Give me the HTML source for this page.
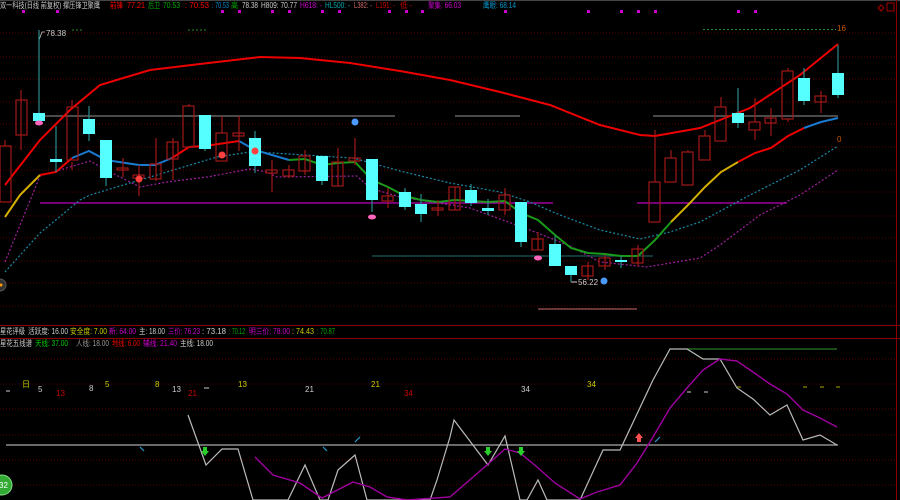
<!DOCTYPE html><html><head><meta charset="utf-8"><style>
html,body{margin:0;padding:0;background:#000;width:900px;height:500px;overflow:hidden}
svg{display:block}
text{font-family:"Liberation Sans","Noto Sans CJK SC",sans-serif;font-size:8px}
</style></head><body>
<svg width="900" height="500" viewBox="0 0 900 500" xmlns="http://www.w3.org/2000/svg">
<rect width="900" height="500" fill="#000"/>
<line x1="0" y1="0.5" x2="900" y2="0.5" stroke="#444"/>
<g stroke="#5a0000" stroke-dasharray="1,2" stroke-width="1">
<line x1="0" y1="33" x2="895" y2="33"/><line x1="0" y1="57" x2="895" y2="57"/><line x1="0" y1="79" x2="895" y2="79"/><line x1="0" y1="102" x2="895" y2="102"/><line x1="0" y1="124" x2="895" y2="124"/><line x1="0" y1="147" x2="895" y2="147"/><line x1="0" y1="170" x2="895" y2="170"/><line x1="0" y1="192" x2="895" y2="192"/><line x1="0" y1="216" x2="895" y2="216"/><line x1="0" y1="238" x2="895" y2="238"/><line x1="0" y1="261" x2="895" y2="261"/><line x1="0" y1="283" x2="895" y2="283"/><line x1="0" y1="306" x2="895" y2="306"/>
<line x1="0" y1="359" x2="895" y2="359"/><line x1="0" y1="384" x2="895" y2="384"/><line x1="0" y1="409" x2="895" y2="409"/><line x1="0" y1="435" x2="895" y2="435"/><line x1="0" y1="460" x2="895" y2="460"/><line x1="0" y1="485" x2="895" y2="485"/>
</g>
<line x1="0" y1="325.5" x2="900" y2="325.5" stroke="#8a0000"/>
<line x1="0" y1="338.5" x2="900" y2="338.5" stroke="#8a0000"/>
<line x1="896.5" y1="0" x2="896.5" y2="500" stroke="#8a0000"/>
<g lengthAdjust="spacingAndGlyphs">
<text x="0" y="8" fill="#ccc" textLength="100" lengthAdjust="spacingAndGlyphs">双一科技(日线 前复权) 撑压锋卫聚鹰</text>
<text x="110" y="8" fill="#f00" textLength="13" lengthAdjust="spacingAndGlyphs">前锋</text><text x="127" y="8" fill="#f00" textLength="18" lengthAdjust="spacingAndGlyphs">77.21</text>
<text x="148" y="8" fill="#0a0" textLength="12" lengthAdjust="spacingAndGlyphs">后卫</text><text x="163" y="8" fill="#0a0" textLength="17" lengthAdjust="spacingAndGlyphs">70.53</text>
<text x="185" y="8" fill="#f00" textLength="24" lengthAdjust="spacingAndGlyphs">: 70.53</text>
<text x="212" y="8" fill="#08c" textLength="17" lengthAdjust="spacingAndGlyphs">: 70.53</text>
<text x="231" y="8" fill="#0a0" textLength="7" lengthAdjust="spacingAndGlyphs">高</text><text x="242" y="8" fill="#ccc" textLength="16" lengthAdjust="spacingAndGlyphs">78.38</text>
<text x="261" y="8" fill="#ccc" textLength="36" lengthAdjust="spacingAndGlyphs">H809: 70.77</text>
<text x="300" y="8" fill="#c0c" textLength="22" lengthAdjust="spacingAndGlyphs">H618: -</text>
<text x="325" y="8" fill="#0aa" textLength="25" lengthAdjust="spacingAndGlyphs">HL500: -</text>
<text x="354" y="8" fill="#c66" textLength="18" lengthAdjust="spacingAndGlyphs">L382: -</text>
<text x="376" y="8" fill="#c00" textLength="19" lengthAdjust="spacingAndGlyphs">L191: -</text>
<text x="400" y="8" fill="#c00" textLength="12" lengthAdjust="spacingAndGlyphs">低 -</text>
<text x="428" y="8" fill="#c0c" textLength="33" lengthAdjust="spacingAndGlyphs">聚集: 66.03</text>
<text x="483" y="8" fill="#09c" textLength="33" lengthAdjust="spacingAndGlyphs">鹰眼: 68.14</text>
</g>
<g fill="#c0c"><rect x="22" y="10" width="3" height="3"/><rect x="56" y="10" width="3" height="3"/><rect x="221" y="10" width="3" height="3"/><rect x="238" y="10" width="3" height="3"/><rect x="271" y="10" width="3" height="3"/><rect x="288" y="10" width="3" height="3"/><rect x="321" y="10" width="3" height="3"/><rect x="338" y="10" width="3" height="3"/><rect x="388" y="10" width="3" height="3"/><rect x="405" y="10" width="3" height="3"/><rect x="421" y="10" width="3" height="3"/><rect x="504" y="10" width="3" height="3"/><rect x="587" y="10" width="3" height="3"/><rect x="620" y="10" width="3" height="3"/><rect x="637" y="10" width="3" height="3"/><rect x="654" y="10" width="3" height="3"/><rect x="737" y="10" width="3" height="3"/><rect x="754" y="10" width="3" height="3"/></g>
<g stroke="#a00" fill="none"><path d="M881 5l3 3-3 3-3-3z"/><rect x="887" y="3" width="7" height="8"/></g>
<g stroke="#2a8a2a" stroke-dasharray="2,2"><line x1="72" y1="30" x2="82" y2="30"/><line x1="188" y1="30" x2="206" y2="30"/><line x1="703" y1="29.5" x2="836" y2="29.5"/></g>
<text x="837" y="31" fill="#c50">16</text><text x="837" y="142" fill="#c50">0</text>
<text x="46" y="36" fill="#ccc">78.38</text>
<path d="M39 40 L42 32 L45 32" stroke="#ccc" fill="none" stroke-width=".8"/>
<text x="578" y="285" fill="#ccc">56.22</text>
<line x1="571" y1="282" x2="577" y2="282" stroke="#ccc"/>
<g stroke-width="1.3">
<line x1="38" y1="116" x2="395" y2="116" stroke="#777"/><line x1="455" y1="116" x2="520" y2="116" stroke="#777"/><line x1="653" y1="116" x2="838" y2="116" stroke="#777"/>
<line x1="40" y1="203" x2="553" y2="203" stroke="#b0b"/><line x1="637" y1="203" x2="787" y2="203" stroke="#b0b"/>
<line x1="372" y1="256" x2="653" y2="256" stroke="#1a5a5a"/>
<line x1="538" y1="309" x2="637" y2="309" stroke="#a55"/>
</g>
<polyline fill="none" stroke="#1a8aa8" stroke-dasharray="2,2" stroke-width="1.2" points="5,272 40,233 80,200 90,195 140,180 217,157 250,152 273,153 353,158 400,171 450,183 500,192 530,202 560,215 600,230 640,239 670,232 700,222 750,195 800,170 838,146"/>
<polyline fill="none" stroke="#a020a0" stroke-dasharray="2,2" stroke-width="1.2" points="5,262 40,176 90,161 110,172 140,187 167,182 207,177 250,169 267,172 277,177 357,176 370,188 400,197 470,208 530,230 570,246 600,262 647,267 700,258 720,245 760,215 800,195 838,170"/>
<polyline fill="none" stroke="#e00" stroke-width="2" points="5,185 40,140 70,110 100,85 150,70 200,64 260,57 300,58 350,63 400,71 450,80 500,92 550,105 600,125 640,135 655,136 700,128 750,108 800,75 838,44"/>
<g fill="none" stroke-width="2">
<polyline stroke="#d4b000" points="5,217 20,195 40,175"/>
<polyline stroke="#e00" points="40,175 56,172 72,158"/>
<polyline stroke="#1a7ad0" points="72,158 89,151 106,160 139,165 155,165 172,158"/>
<polyline stroke="#e00" points="172,158 189,147 205,146 239,141"/>
<polyline stroke="#1a7ad0" points="239,141 255,150 272,155 289,160"/>
<polyline stroke="#1a9a1a" points="289,160 305,159 322,165 338,163 355,162 372,180 388,187 405,196 421,200 438,202 455,200 471,201 488,202 505,201 521,213 538,220 555,235 571,248 588,253 605,254 621,256 638,256 655,240 671,222"/>
<polyline stroke="#d4b000" points="671,222 688,205 705,187 721,172 738,162"/>
<polyline stroke="#e00" points="738,162 755,153 771,148 788,136 804,128"/>
<polyline stroke="#1a7ad0" points="804,128 821,122 838,118"/>
</g>
<g stroke="#a01818" fill="none" stroke-width="1.2">
<path d="M5 140V146M21 90V150M72 100V107M72 162V170M123 158V177M139 165V196M156 138V181M173 138V180M189 104V106M222 116V133M239 116V151M272 160V192M289 165V178M305 150V175M338 148V186M355 138V165M388 188V208M438 200V216M455 187V210M505 188V215M538 232V250M588 262V280M605 255V270M638 245V266M655 130V182M671 150V158M688 150V152M705 130V136M721 97V107M755 98V122M755 130V140M771 108V136M788 68V71M788 119V122M821 91V113"/>
<rect x="0" y="146" width="11" height="56"/><rect x="16" y="100" width="11" height="35"/><rect x="67" y="107" width="11" height="53"/>
<rect x="117" y="168" width="11" height="2"/><rect x="133" y="175" width="11" height="3"/><rect x="150" y="164" width="11" height="15"/><rect x="167" y="142" width="11" height="17"/><rect x="183" y="106" width="11" height="41"/>
<rect x="216" y="133" width="11" height="28"/><rect x="233" y="133" width="11" height="3"/><rect x="266" y="170" width="11" height="3"/><rect x="283" y="170" width="11" height="6"/><rect x="299" y="156" width="11" height="15"/><rect x="332" y="162" width="11" height="24"/><rect x="349" y="158" width="11" height="3"/>
<rect x="382" y="196" width="11" height="5"/><rect x="432" y="208" width="11" height="2"/><rect x="449" y="187" width="11" height="23"/><rect x="499" y="195" width="11" height="15"/><rect x="532" y="239" width="11" height="11"/><rect x="582" y="266" width="11" height="10"/><rect x="599" y="258" width="11" height="8"/><rect x="632" y="249" width="11" height="14"/>
<rect x="649" y="182" width="11" height="40"/><rect x="665" y="158" width="11" height="24"/><rect x="682" y="152" width="11" height="33"/><rect x="699" y="136" width="11" height="24"/><rect x="715" y="107" width="11" height="34"/><rect x="749" y="122" width="11" height="8"/><rect x="765" y="118" width="11" height="5"/><rect x="782" y="71" width="11" height="48"/><rect x="815" y="96" width="11" height="6"/>
</g>
<g stroke="#2a8a8a" stroke-width="1.2"><path d="M39 30V113M56 126V172M89 106V141M106 178V186M205 149V151M255 131V173M322 181V185M372 200V212M405 188V210M421 194V222M471 184V206M488 199V215M521 242V247M555 236V266M571 275V282M621 256V268M738 88V128M804 68V105M838 45V98"/></g>
<g fill="#55ffff">
<rect x="33" y="113" width="12" height="8"/><rect x="50" y="159" width="12" height="3"/><rect x="83" y="119" width="12" height="15"/><rect x="100" y="140" width="12" height="38"/><rect x="199" y="115" width="12" height="34"/><rect x="249" y="138" width="12" height="28"/><rect x="316" y="156" width="12" height="25"/><rect x="366" y="159" width="12" height="41"/><rect x="399" y="192" width="12" height="15"/><rect x="415" y="204" width="12" height="10"/><rect x="465" y="190" width="12" height="13"/><rect x="482" y="208" width="12" height="3"/><rect x="515" y="202" width="12" height="40"/><rect x="549" y="244" width="12" height="22"/><rect x="565" y="266" width="12" height="9"/><rect x="615" y="260" width="12" height="2"/><rect x="732" y="113" width="12" height="10"/><rect x="798" y="78" width="12" height="23"/><rect x="832" y="73" width="12" height="22"/>
</g>
<g fill="#ff4040"><circle cx="139" cy="179" r="3.5"/><circle cx="222" cy="155" r="3.5"/><circle cx="255" cy="151" r="3.5"/></g>
<g fill="#4a9aff"><circle cx="355" cy="122" r="3.5"/><circle cx="604" cy="281" r="3.5"/></g>
<g fill="#ff66bb"><ellipse cx="39" cy="123" rx="4" ry="2.5"/><ellipse cx="372" cy="217" rx="4" ry="2.5"/><ellipse cx="538" cy="258" rx="4" ry="2.5"/></g>
<circle cx="0" cy="285" r="6" fill="#333" stroke="#555"/><circle cx="1" cy="285" r="1.5" fill="#f90"/>
<text x="0" y="334" fill="#ccc" textLength="25" lengthAdjust="spacingAndGlyphs">星花评级</text><text x="28" y="334" fill="#ccc" textLength="40" lengthAdjust="spacingAndGlyphs">活跃度: 16.00</text>
<text x="70" y="334" fill="#cc0" textLength="37" lengthAdjust="spacingAndGlyphs">安全度: 7.00</text><text x="109" y="334" fill="#c0c" textLength="27" lengthAdjust="spacingAndGlyphs">新: 64.00</text>
<text x="139" y="334" fill="#ccc" textLength="26" lengthAdjust="spacingAndGlyphs">主: 18.00</text><text x="168" y="334" fill="#c0c" textLength="32" lengthAdjust="spacingAndGlyphs">三价: 76.23</text>
<text x="202" y="334" fill="#ccc" textLength="24" lengthAdjust="spacingAndGlyphs">: 73.18</text><text x="229" y="334" fill="#0a0" textLength="16" lengthAdjust="spacingAndGlyphs">: 70.12</text>
<text x="249" y="334" fill="#c0c" textLength="41" lengthAdjust="spacingAndGlyphs">明三价: 78.00</text><text x="292" y="334" fill="#cc0" textLength="22" lengthAdjust="spacingAndGlyphs">: 74.43</text><text x="317" y="334" fill="#0a0" textLength="18" lengthAdjust="spacingAndGlyphs">: 70.87</text>
<text x="0" y="346" fill="#ccc" textLength="32" lengthAdjust="spacingAndGlyphs">星花五线谱</text><text x="35" y="346" fill="#0c0" textLength="33" lengthAdjust="spacingAndGlyphs">天线: 37.00</text>
<text x="76" y="346" fill="#999" textLength="33" lengthAdjust="spacingAndGlyphs">人线: 18.00</text><text x="112" y="346" fill="#e00" textLength="28" lengthAdjust="spacingAndGlyphs">地线: 6.00</text>
<text x="143" y="346" fill="#c0c" textLength="34" lengthAdjust="spacingAndGlyphs">辅线: 21.40</text><text x="180" y="346" fill="#ccc" textLength="33" lengthAdjust="spacingAndGlyphs">主线: 18.00</text>
<g>
<text x="22" y="387" fill="#cc0">日</text><text x="38" y="392" fill="#ccc">5</text><text x="56" y="396" fill="#c00">13</text><text x="89" y="391" fill="#ccc">8</text><text x="105" y="387" fill="#cc0">5</text><text x="155" y="387" fill="#cc0">8</text><text x="172" y="392" fill="#ccc">13</text><text x="188" y="396" fill="#c00">21</text><text x="238" y="387" fill="#cc0">13</text><text x="305" y="392" fill="#ccc">21</text><text x="371" y="387" fill="#cc0">21</text><text x="404" y="396" fill="#c00">34</text><text x="521" y="392" fill="#ccc">34</text><text x="587" y="387" fill="#cc0">34</text>
</g>
<g stroke="#ccc"><line x1="6" y1="391" x2="10" y2="391"/><line x1="204" y1="388" x2="209" y2="388"/><line x1="687" y1="392" x2="691" y2="392"/><line x1="704" y1="392" x2="708" y2="392"/></g>
<g stroke="#aa0"><line x1="737" y1="387" x2="741" y2="387"/><line x1="803" y1="387" x2="807" y2="387"/><line x1="820" y1="387" x2="824" y2="387"/><line x1="836" y1="387" x2="840" y2="387"/></g>
<line x1="6" y1="445" x2="838" y2="445" stroke="#aaa" stroke-width="1.2"/>
<line x1="687" y1="349" x2="837" y2="349" stroke="#2a7a2a" stroke-width="1.2"/>
<polyline fill="none" stroke="#bbb" stroke-width="1.2" points="188,415 206,465 222,449 238,449 253,500 288,500 305,465 320,500 328,500 338,470 355,455 367,500 430,500 437,480 450,437 454,420 488,465 505,436 520,500 527,500 538,480 547,500 580,500 603,450 620,450 653,380 670,349 687,349 703,359 720,359 737,388 753,399 770,415 787,405 803,440 820,435 837,445"/>
<polyline fill="none" stroke="#a000a0" stroke-width="1.4" points="255,457 273,475 300,483 322,498 353,482 370,487 387,497 407,500 450,497 487,465 505,449 520,453 537,467 555,483 580,499 597,492 620,485 637,463 653,437 670,408 687,388 703,370 720,359 737,361 753,372 770,384 787,394 803,410 820,418 837,427"/>
<g fill="#2ad02a"><path d="M203 447h4v4h2l-4 5-4-5h2z"/><path d="M486 447h4v4h2l-4 5-4-5h2z"/><path d="M519 447h4v4h2l-4 5-4-5h2z"/></g>
<path d="M637 442h4v-4h2l-4-5-4 5h2z" fill="#ff5050"/>
<g stroke="#2a9ad0" stroke-width="1.2"><line x1="140" y1="447" x2="144" y2="451"/><line x1="323" y1="447" x2="327" y2="451"/><line x1="355" y1="442" x2="360" y2="437"/><line x1="655" y1="442" x2="660" y2="437"/></g>
<circle cx="2" cy="485" r="10" fill="#3a3" stroke="#8d8"/><text x="-1" y="488" fill="#fff">32</text>
</svg>
</body></html>
